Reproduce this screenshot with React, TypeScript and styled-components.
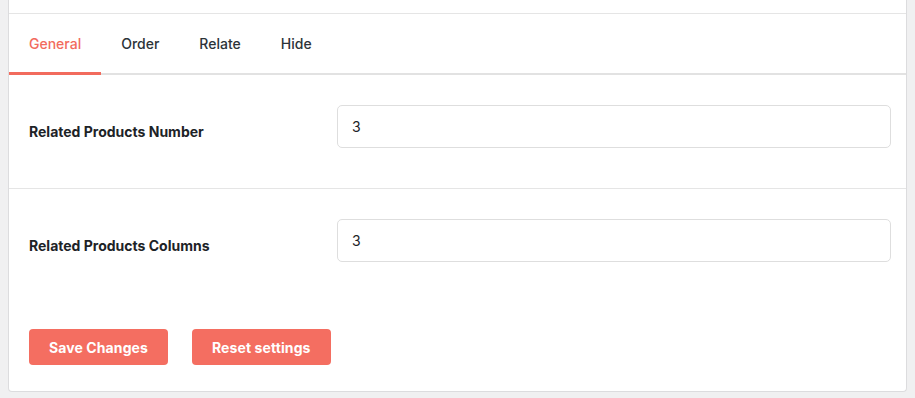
import React, { useState } from "react";
import styled, { createGlobalStyle } from "styled-components";

const Global = createGlobalStyle`
  html, body { margin: 0; padding: 0; background: #f0f0f1; }
  body { font-family: Inter, "Noto Sans", Arial, sans-serif; color: #1d2327; }
  * { box-sizing: border-box; }
`;

const Page = styled.div`
  padding: 0 8px 8px 8px;
`;

const Card = styled.div`
  background: #fff;
  border: 1px solid #dcdcde;
  border-top: none;
  border-radius: 0 0 4px 4px;
`;

const TopStrip = styled.div`
  height: 14px;
  border-bottom: 1px solid #e5e5e5;
`;

const TabBar = styled.nav`
  display: flex;
  border-bottom: 2px solid #e2e2e2;
`;

const Tab = styled.button<{ $active?: boolean }>`
  appearance: none;
  background: none;
  border: none;
  border-bottom: 3px solid ${(p) => (p.$active ? "#f26b5d" : "transparent")};
  margin-bottom: -2px;
  padding: 0 20px;
  height: 61px;
  font-family: inherit;
  font-size: 14px;
  font-weight: 500;
  color: ${(p) => (p.$active ? "#f26b5d" : "#2c3338")};
  cursor: pointer;
`;

const Row = styled.div<{ $divider?: boolean }>`
  display: grid;
  grid-template-columns: 308px 1fr;
  align-items: center;
  padding: 30px 15px 40px 20px;
  border-bottom: ${(p) => (p.$divider ? "1px solid #e5e5e5" : "none")};
`;

const Label = styled.label`
  font-size: 14px;
  font-weight: 700;
  color: #1d2327;
  padding-top: 10px;
`;

const Input = styled.input`
  height: 43px;
  width: 100%;
  border: 1px solid #dedede;
  border-radius: 5px;
  padding: 0 14px;
  font-family: inherit;
  font-size: 14px;
  color: #1d2327;
  outline: none;
`;

const Actions = styled.div`
  display: flex;
  gap: 24px;
  padding: 27px 20px 26px 20px;
`;

const Button = styled.button`
  appearance: none;
  border: none;
  background: #f46e61;
  color: #fff;
  height: 36px;
  padding: 0 20px;
  border-radius: 4px;
  font-family: inherit;
  font-size: 14px;
  font-weight: 700;
  letter-spacing: 0.1px;
  cursor: pointer;
`;

const tabs = ["General", "Order", "Relate", "Hide"];

export default function App() {
  const [active, setActive] = useState("General");
  return (
    <>
      <Global />
      <Page>
        <Card>
          <TopStrip />
          <TabBar>
            {tabs.map((t) => (
              <Tab key={t} $active={t === active} onClick={() => setActive(t)}>
                {t}
              </Tab>
            ))}
          </TabBar>
          <Row $divider>
            <Label>Related Products Number</Label>
            <Input defaultValue="3" />
          </Row>
          <Row>
            <Label>Related Products Columns</Label>
            <Input defaultValue="3" />
          </Row>
          <Actions>
            <Button>Save Changes</Button>
            <Button>Reset settings</Button>
          </Actions>
        </Card>
      </Page>
    </>
  );
}
